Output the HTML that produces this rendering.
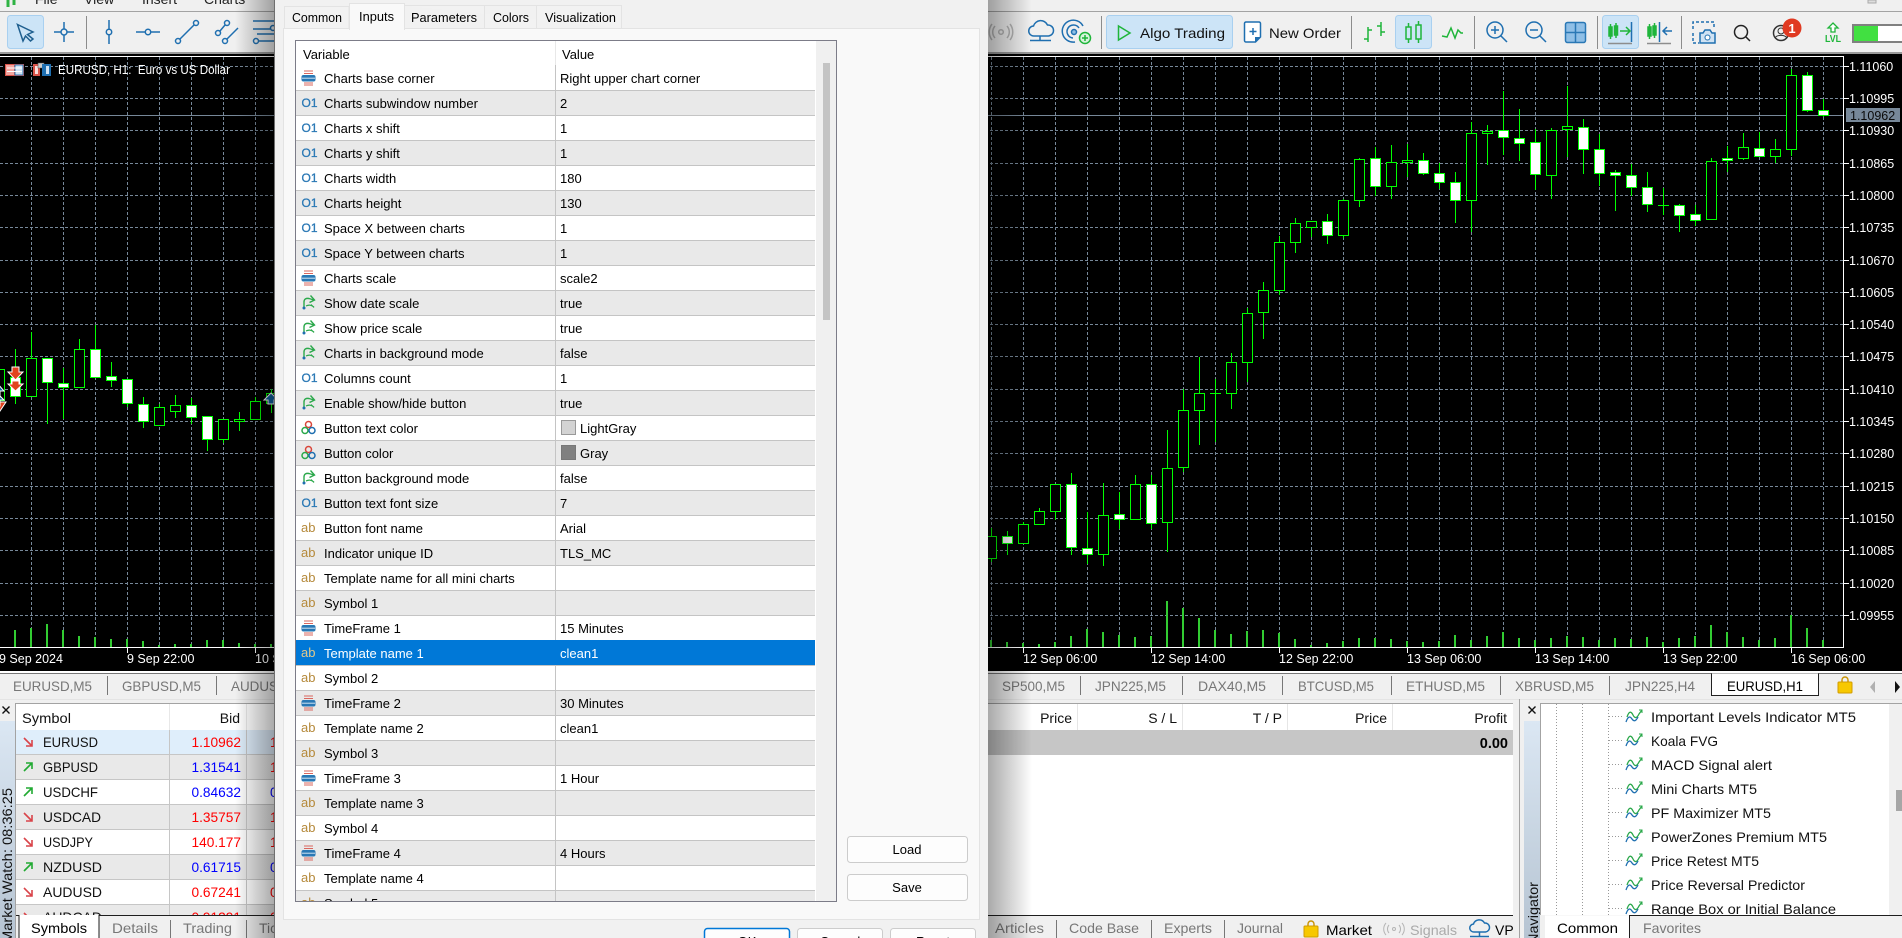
<!DOCTYPE html>
<html><head><meta charset="utf-8"><title>MetaTrader - Mini Charts inputs</title>
<style>
html,body{margin:0;padding:0;background:#f0f0f0;overflow:hidden}
svg{display:block}
text{font-family:"Liberation Sans",sans-serif;font-size:13px;fill:#000}
.c{font-size:12.5px;fill:#fff}
.t{font-size:14px;fill:#777}
.p{font-size:14px;fill:#111}
.m{font-size:14px;fill:#222}
.n{font-size:12px;fill:#2a78b5;stroke:#2a78b5;stroke-width:.3px}
.a{font-size:13px;fill:#b5893a}
.r{fill:#f00;font-size:13.7px}
.b{fill:#00f;font-size:13.7px}
.ic{fill:none;stroke:#1f6fb0;stroke-width:1.5}
.g{fill:none;stroke:#1fb53a;stroke-width:1.5}
</style></head><body>
<svg width="1902" height="938" viewBox="0 0 1902 938" xmlns="http://www.w3.org/2000/svg">
<defs>
<linearGradient id="sl" x1="0" x2="1" y1="0" y2="0"><stop offset="0" stop-color="#000" stop-opacity="0"/><stop offset="1" stop-color="#000" stop-opacity=".34"/></linearGradient>
<linearGradient id="sr" x1="0" x2="1" y1="0" y2="0"><stop offset="0" stop-color="#000" stop-opacity=".34"/><stop offset="1" stop-color="#000" stop-opacity="0"/></linearGradient>
<linearGradient id="bs" x1="0" x2="0" y1="0" y2="1"><stop offset="0" stop-color="#dbe7f3"/><stop offset="1" stop-color="#b6c4d2"/></linearGradient>
<g id="ie"><path d="M3 1h9M3 3.500h9M3 13h9M3 15h9" stroke="#d9665e" fill="none"/><rect x="0.500" y="5" width="14" height="6.500" rx="2" fill="#2a78b5"/><path d="M1 8.200h13" stroke="#cfe3f2"/></g>
<g id="ib" fill="none"><path d="M3 15V8C3 5 5 4 8 4.500L13 6" stroke="#2aa84a" stroke-width="1.400"/><path d="M9.500 1.500L13.500 6L8.500 8.500" stroke="#2aa84a" stroke-width="1.400"/><path d="M5 12C8 10.500 10 11 13 13M10 10.500L13 13.500" stroke="#2aa84a" stroke-width="1.200"/><circle cx="3" cy="14" r="1.500" fill="#1f6fb0"/></g>
<g id="icl"><circle cx="7.500" cy="4.500" r="3" fill="none" stroke="#d9463a" stroke-width="1.500"/><circle cx="4" cy="10.500" r="3" fill="none" stroke="#2aa84a" stroke-width="1.500"/><circle cx="11" cy="10.500" r="3" fill="none" stroke="#1f6fb0" stroke-width="1.500"/></g>
<g id="dn"><path d="M1 1L9 9M9 3V9H3" fill="none" stroke="#d9444a" stroke-width="1.600"/></g>
<g id="up"><path d="M1 9L9 1M3 1H9V7" fill="none" stroke="#22aa33" stroke-width="1.600"/></g>
<g id="tr" fill="none"><path d="M1 8C3 2 5 2 7 6S11 9 13 5L16 1" stroke="#2aa84a" stroke-width="1.300"/><path d="M0 13C2 7 4 7 6 10S10 12 12 8" stroke="#1f6fb0" stroke-width="1.300"/><path d="M13 1h3v3" stroke="#2aa84a"/></g>
<g id="bag"><rect x="0" y="5" width="14" height="11" rx="1" fill="#f7c800" stroke="#d29c00"/><path d="M4 5V3a3 3 0 0 1 6 0V5" fill="none" stroke="#c89200" stroke-width="1.400"/></g>
</defs>

<!-- base -->
<rect width="1902" height="938" fill="#f0f0f0"/>

<!-- menu -->
<path d="M8 0V7M14 0V5" stroke="#2fb344" stroke-width="3"/>
<text class="m" x="35" y="4">File</text><text class="m" x="84" y="4">View</text><text class="m" x="142" y="4">Insert</text><text class="m" x="204" y="4">Charts</text>
<rect y="11" width="1902" height="1" fill="#a3a3a3"/>

<!-- chart -->
<rect y="53" width="1902" height="618" fill="#000"/>
<rect y="52" width="1902" height="2" fill="#9a9a9a"/>
<rect y="56" width="1843" height="1" fill="#fff"/>
<path stroke="#778899" stroke-dasharray="3 2" fill="none" d="M0 66.500H1843M0 98.500H1843M0 130.500H1843M0 163.500H1843M0 195.500H1843M0 227.500H1843M0 260.500H1843M0 292.500H1843M0 324.500H1843M0 356.500H1843M0 389.500H1843M0 421.500H1843M0 453.500H1843M0 486.500H1843M0 518.500H1843M0 550.500H1843M0 583.500H1843M0 615.500H1843"/>
<path stroke="#778899" stroke-dasharray="3 2" fill="none" d="M31.500 57V647M63.500 57V647M95.500 57V647M127.500 57V647M159.500 57V647M191.500 57V647M223.500 57V647M255.500 57V647M991.500 57V647M1023.500 57V647M1055.500 57V647M1087.500 57V647M1119.500 57V647M1151.500 57V647M1183.500 57V647M1215.500 57V647M1247.500 57V647M1279.500 57V647M1311.500 57V647M1343.500 57V647M1375.500 57V647M1407.500 57V647M1439.500 57V647M1471.500 57V647M1503.500 57V647M1535.500 57V647M1567.500 57V647M1599.500 57V647M1631.500 57V647M1663.500 57V647M1695.500 57V647M1727.500 57V647M1759.500 57V647M1791.500 57V647M1823.500 57V647"/>
<rect y="115" width="1843" height="1" fill="#778899"/>

<!-- volumes -->
<path stroke="#32cd32" stroke-width="2" fill="none" d="M15 630V647M31 628V647M47 624V647M63 630V647M79 636V647M95 637V647M111 639V647M127 639V647M143 641V647M159 645V647M175 644V647M191 644V647M207 640V647M223 640V647M239 643V647M255 644V647M271 644V647M991 640V647M1007 642V647M1023 643V647M1039 644V647M1055 642V647M1071 636V647M1087 629V647M1103 632V647M1119 635V647M1135 637V647M1151 636V647M1167 601V647M1183 608V647M1199 618V647M1215 630V647M1231 634V647M1247 631V647M1263 630V647M1279 633V647M1295 639V647M1311 645V647M1327 643V647M1343 641V647M1359 638V647M1375 638V647M1391 639V647M1407 641V647M1423 642V647M1439 641V647M1455 635V647M1471 640V647M1487 636V647M1503 632V647M1519 638V647M1535 640V647M1551 638V647M1567 636V647M1583 637V647M1599 640V647M1615 638V647M1631 639V647M1647 637V647M1663 642V647M1679 638V647M1695 636V647M1711 625V647M1727 632V647M1743 637V647M1759 640V647M1775 638V647M1791 615V647M1807 628V647M1823 640V647"/>

<!-- wicks -->
<path stroke="#0f0" fill="none" d="M15.500 349V404M31.500 332V396M47.500 358V424M63.500 368V419M79.500 339V387M95.500 325V377M111.500 362V387M127.500 379V407M143.500 397V428M159.500 404V425M175.500 395V418M191.500 398V424M207.500 416V451M223.500 419V443M239.500 412V431M255.500 397V419M271.500 389V413M991.500 528V562M1007.500 531V555M1023.500 522V544M1039.500 508V524M1055.500 484V520M1071.500 473V555M1087.500 512V564M1103.500 483V566M1119.500 492V529M1135.500 475V520M1151.500 475V529M1167.500 430V552M1183.500 389V472M1199.500 357V445M1215.500 379V442M1231.500 353V409M1247.500 308V382M1263.500 282V339M1279.500 236V295M1295.500 218V253M1311.500 221V237M1327.500 214V244M1343.500 199V238M1359.500 158V207M1375.500 147V196M1391.500 145V199M1407.500 144V177M1423.500 153V175M1439.500 163V189M1455.500 172V223M1471.500 122V232M1487.500 125V165M1503.500 91V155M1519.500 109V161M1535.500 129V190M1551.500 128V199M1567.500 86V157M1583.500 119V174M1599.500 134V186M1615.500 170V211M1631.500 164V196M1647.500 172V212M1663.500 188V215M1679.500 204V232M1695.500 205V226M1711.500 158V219M1727.500 146V172M1743.500 133V160M1759.500 132V156M1775.500 139V163M1791.500 69V156M1807.500 72V112M1823.500 99V117M1210 393.500H1221M1658 205.500H1669"/>
<!-- hollow bodies -->
<path stroke="#0f0" fill="#000" d="M-5.500 369.500h10V400.500h-10zM26.500 358.500h10V396.500h-10zM74.500 349.500h10V387.500h-10zM154.500 407.500h10V425.500h-10zM170.500 405.500h10V411.500h-10zM218.500 419.500h10V439.500h-10zM234.500 419.500h10V421.500h-10zM250.500 401.500h10V419.500h-10zM266.500 393.500h10V403.500h-10zM986.500 536.500h10V558.500h-10zM1018.500 524.500h10V543.500h-10zM1034.500 511.500h10V524.500h-10zM1050.500 484.500h10V511.500h-10zM1098.500 515.500h10V554.500h-10zM1130.500 484.500h10V519.500h-10zM1162.500 468.500h10V522.500h-10zM1178.500 410.500h10V467.500h-10zM1194.500 393.500h10V410.500h-10zM1226.500 362.500h10V393.500h-10zM1242.500 313.500h10V362.500h-10zM1258.500 290.500h10V312.500h-10zM1274.500 242.500h10V290.500h-10zM1290.500 223.500h10V242.500h-10zM1306.500 221.500h10V227.500h-10zM1338.500 200.500h10V235.500h-10zM1354.500 159.500h10V200.500h-10zM1386.500 162.500h10V186.500h-10zM1402.500 160.500h10V162.500h-10zM1466.500 133.500h10V200.500h-10zM1482.500 131.500h10V133.500h-10zM1546.500 130.500h10V175.500h-10zM1562.500 126.500h10V129.500h-10zM1706.500 161.500h10V219.500h-10zM1738.500 147.500h10V158.500h-10zM1770.500 149.500h10V156.500h-10zM1786.500 75.500h10V149.500h-10z"/>
<!-- white bodies -->
<path stroke="#0f0" fill="#fff" d="M10.500 377.500h10V396.500h-10zM42.500 358.500h10V382.500h-10zM58.500 383.500h10V387.500h-10zM90.500 349.500h10V377.500h-10zM106.500 376.500h10V380.500h-10zM122.500 379.500h10V403.500h-10zM138.500 404.500h10V421.500h-10zM186.500 405.500h10V417.500h-10zM202.500 416.500h10V439.500h-10zM1002.500 536.500h10V543.500h-10zM1066.500 484.500h10V547.500h-10zM1082.500 548.500h10V554.500h-10zM1114.500 514.500h10V519.500h-10zM1146.500 484.500h10V523.500h-10zM1322.500 221.500h10V235.500h-10zM1370.500 158.500h10V186.500h-10zM1418.500 160.500h10V173.500h-10zM1434.500 173.500h10V182.500h-10zM1450.500 182.500h10V200.500h-10zM1498.500 130.500h10V137.500h-10zM1514.500 138.500h10V143.500h-10zM1530.500 142.500h10V174.500h-10zM1578.500 127.500h10V149.500h-10zM1594.500 149.500h10V173.500h-10zM1610.500 172.500h10V175.500h-10zM1626.500 175.500h10V187.500h-10zM1642.500 187.500h10V204.500h-10zM1674.500 205.500h10V215.500h-10zM1690.500 214.500h10V220.500h-10zM1722.500 158.500h10V160.500h-10zM1754.500 148.500h10V156.500h-10zM1802.500 75.500h10V110.500h-10zM1818.500 110.500h10V115.500h-10z"/>
<!-- signal arrows -->
<path fill="#e2431e" stroke="#fff" d="M12 367h7v5h4l-7.500 8L8 372h4zM12 381h7v3h4l-7.500 7L8 384h4zM-6 404h6v-2h6l-6 9z"/>
<path fill="#0e5f9e" stroke="#fff" d="M-2 384l6 7H0v6h-4zM-2 394l6 6H0v6h-4zM271 393l7 7h-4v4h-6v-4h-4z"/>

<!-- axes -->
<path fill="none" stroke="#fff" d="M1843.500 56V648M0 647.500H1844M1844 66.500h5M1844 98.500h5M1844 130.500h5M1844 163.500h5M1844 195.500h5M1844 227.500h5M1844 260.500h5M1844 292.500h5M1844 324.500h5M1844 356.500h5M1844 389.500h5M1844 421.500h5M1844 453.500h5M1844 486.500h5M1844 518.500h5M1844 550.500h5M1844 583.500h5M1844 615.500h5M127.500 648v5M255.500 648v5M1023.500 648v5M1151.500 648v5M1279.500 648v5M1407.500 648v5M1535.500 648v5M1663.500 648v5M1791.500 648v5"/>
<text class="c" x="1849" y="71">1.11060</text><text class="c" x="1849" y="103">1.10995</text><text class="c" x="1849" y="135">1.10930</text><text class="c" x="1849" y="168">1.10865</text><text class="c" x="1849" y="200">1.10800</text><text class="c" x="1849" y="232">1.10735</text><text class="c" x="1849" y="265">1.10670</text><text class="c" x="1849" y="297">1.10605</text><text class="c" x="1849" y="329">1.10540</text><text class="c" x="1849" y="361">1.10475</text><text class="c" x="1849" y="394">1.10410</text><text class="c" x="1849" y="426">1.10345</text><text class="c" x="1849" y="458">1.10280</text><text class="c" x="1849" y="491">1.10215</text><text class="c" x="1849" y="523">1.10150</text><text class="c" x="1849" y="555">1.10085</text><text class="c" x="1849" y="588">1.10020</text><text class="c" x="1849" y="620">1.09955</text>
<rect x="1846" y="108" width="54" height="14" fill="#778899"/>
<text class="c" x="1850" y="120" style="fill:#0b0b0b">1.10962</text>
<text class="c" x="-1" y="663">9 Sep 2024</text><text class="c" x="127" y="663">9 Sep 22:00</text><text class="c" x="255" y="663">10 Sep 06:00</text>
<text class="c" x="1023" y="663">12 Sep 06:00</text><text class="c" x="1151" y="663">12 Sep 14:00</text><text class="c" x="1279" y="663">12 Sep 22:00</text><text class="c" x="1407" y="663">13 Sep 06:00</text><text class="c" x="1535" y="663">13 Sep 14:00</text><text class="c" x="1663" y="663">13 Sep 22:00</text><text class="c" x="1791" y="663">16 Sep 06:00</text>
<!-- chart title -->
<g>
<rect x="5.500" y="64.500" width="18" height="11" fill="#fff" stroke="#d9544a"/><rect x="5.500" y="64.500" width="9" height="11" fill="#f2a6a0" stroke="#d9544a"/><rect x="15" y="65" width="8" height="10" fill="#cfe2f3" stroke="#2a78b5"/><path d="M7 68h15M7 71.500h15" stroke="#fff"/>
<path d="M33 64h7v12h-7z" fill="#d9544a"/><path d="M35 66h3v8h-3z" fill="#fbdedc"/><path d="M38 63h6v5h-6z" fill="#ccc" stroke="#555" stroke-width=".6"/><path d="M42 64h9v12h-9z" fill="#1f6fb0"/><path d="M46 66h3v8h-3z" fill="#cfe2f3"/>
</g>
<text class="c" x="58" y="74" textLength="172" lengthAdjust="spacingAndGlyphs">EURUSD, H1:&#160; Euro vs US Dollar</text>
<rect y="671" width="1902" height="2" fill="#fff"/>
<rect y="673" width="1902" height="1" fill="#777"/>

<!-- toolbar left -->
<rect x="7.500" y="15.500" width="36" height="33" rx="3" fill="#cce4f7" stroke="#a9d0f0"/>
<path d="M17.500 24.500L33 32L27.500 34.500L33 39L30.500 41L25.500 36L23 41Z" fill="none" stroke="#1f5f8f" stroke-width="1.500"/>
<g class="ic"><circle cx="64" cy="32" r="3"/><path d="M54 32h7M67 32h7M64 22v7M64 35v7"/></g>
<rect x="86" y="16" width="1" height="33" fill="#8c8c8c"/>
<g class="ic"><path d="M109 20v9M109 35v9"/><circle cx="109" cy="32" r="2.700"/><path d="M136 32h9M151 32h9"/><circle cx="148" cy="32" r="2.700"/><circle cx="178" cy="41" r="2.500"/><circle cx="196" cy="23" r="2.500"/><path d="M180 39L194 25"/><circle cx="218" cy="33" r="2.500"/><circle cx="227" cy="23" r="2.500"/><path d="M220 31L225 25"/><circle cx="225" cy="41" r="2.500"/><path d="M227 39L238 28"/><path d="M253 21h22M253 29h18M257 34h18M259 41h16"/><circle cx="273" cy="28" r="2.500"/><circle cx="256" cy="41" r="2.500"/></g>

<!-- toolbar right -->
<g fill="none" stroke="#b5b5b5" stroke-width="1.500"><circle cx="1001" cy="32" r="2.300"/><path d="M995 26a9 9 0 0 0 0 12M1007 26a9 9 0 0 1 0 12M992 24a13 13 0 0 0 0 16M1010 24a13 13 0 0 1 0 16"/></g>
<g class="ic"><path d="M1034 36a5 5 0 0 1-.5-10 7.500 7.500 0 0 1 14-1 5.500 5.500 0 0 1 1 11z"/><path d="M1040 36v4M1030 40.500h21"/></g>
<g class="ic"><path d="M1083 26a11 11 0 1 0-8 16"/><path d="M1079 28a6.500 6.500 0 1 0-6 10"/><circle cx="1074" cy="32" r="2.500" fill="#8fbfe6"/></g>
<circle cx="1085" cy="38" r="5.500" fill="#d7f3dc" stroke="#1fb53a" stroke-width="1.500"/><path d="M1082 38h6M1085 35v6" stroke="#1fb53a" stroke-width="1.500"/>
<rect x="1101" y="16" width="1" height="33" fill="#8c8c8c"/>
<rect x="1106.500" y="15.500" width="126" height="33" rx="3" fill="#cce4f7" stroke="#a9d0f0"/>
<path d="M1118.500 26L1130 33L1118.500 40Z" fill="none" stroke="#1fb53a" stroke-width="1.500"/>
<text class="m" x="1140" y="38" textLength="85" lengthAdjust="spacingAndGlyphs" style="fill:#111">Algo Trading</text>
<path d="M1246 22h13a1.500 1.500 0 0 1 1.500 1.500V37l-5 5h-9.500a1.500 1.500 0 0 1-1.500-1.500v-17a1.500 1.500 0 0 1 1.500-1.500z" fill="#fff" stroke="#1f6fb0" stroke-width="1.500"/>
<path d="M1253 28v7M1249.500 31.500h7" stroke="#1f6fb0" stroke-width="1.500"/><path d="M1255 42v-5h5z" fill="#1f6fb0"/>
<text class="m" x="1269" y="38" textLength="72" lengthAdjust="spacingAndGlyphs" style="fill:#111">New Order</text>
<rect x="1351" y="16" width="1" height="33" fill="#8c8c8c"/>
<path class="g" d="M1368 27v15M1364 39h4M1368 30h4M1381 22v14M1377 26h4M1381 32h4"/>
<rect x="1395.500" y="15.500" width="36" height="33" rx="3" fill="#cce4f7" stroke="#a9d0f0"/>
<path class="g" d="M1406 27h5v12h-5zM1408.500 23v4M1408.500 39v4M1416 25h5v14h-5zM1418.500 21v4M1418.500 39v4"/>
<path class="g" d="M1442 36L1447 37L1451 28L1455 38L1458 30L1461 33L1463 33"/>
<rect x="1474" y="16" width="1" height="33" fill="#8c8c8c"/>
<g class="ic"><circle cx="1495" cy="30" r="8"/><path d="M1501 36L1507 42M1491 30h8M1495 26v8"/><circle cx="1534" cy="30" r="8"/><path d="M1540 36L1546 42M1530 30h8"/></g>
<rect x="1565.500" y="22.500" width="20" height="20" rx="2" fill="#8fbfe6" stroke="#2a78b5" stroke-width="1.500"/><path d="M1575.500 22v21M1565 32.500h21" stroke="#2a78b5" stroke-width="1.500"/>
<rect x="1597" y="16" width="1" height="33" fill="#8c8c8c"/>
<rect x="1602.500" y="15.500" width="36" height="33" rx="3" fill="#cce4f7" stroke="#a9d0f0"/>
<path class="g" d="M1609 27h3v9h-3zM1610.500 24v15M1614.500 26h3v9h-3zM1616 23v15M1620 31h10M1626 27l4 4-4 4"/>
<path d="M1631.500 22v20" stroke="#1f6fb0" stroke-width="1.500"/><path d="M1608 43.500h24" stroke="#8d8d8d" stroke-width="1.500"/>
<path class="g" d="M1648 27h3v9h-3zM1649.500 24v15M1653 26h3v9h-3zM1654.500 23v15"/>
<path d="M1659.500 22v20M1672 31h-9M1667 27l-4 4 4 4" fill="none" stroke="#1f6fb0" stroke-width="1.500"/><path d="M1647 43.500h24" stroke="#8d8d8d" stroke-width="1.500"/>
<rect x="1681" y="16" width="1" height="33" fill="#8c8c8c"/>
<path d="M1693 29v-7h21v5M1693 33v10h6" fill="none" stroke="#1f6fb0" stroke-width="1.500" stroke-dasharray="3 2"/>
<path d="M1700 33h3l2-3h5l2 3h3v10h-15z" fill="#cfe2f3" stroke="#1f6fb0" stroke-width="1.500"/><circle cx="1707.500" cy="37.500" r="2.500" fill="#fff" stroke="#1f6fb0"/>
<circle cx="1741" cy="32" r="6.500" fill="none" stroke="#222" stroke-width="1.500"/><path d="M1746 37L1750 41" stroke="#222" stroke-width="1.500"/>
<circle cx="1781" cy="33" r="7.500" fill="#f0f0f0" stroke="#333" stroke-width="1.500"/><circle cx="1781" cy="31" r="3" fill="none" stroke="#333"/><path d="M1775 38c2-3.500 10-3.500 12 0" fill="none" stroke="#333"/>
<circle cx="1792" cy="28" r="9.500" fill="#e03a22"/><text x="1792" y="33" text-anchor="middle" style="fill:#fff;font-weight:bold;font-size:13px">1</text>
<path d="M1833 23l5 5h-3v4h-4v-4h-3z" fill="#fff" stroke="#1fb53a" stroke-width="1.300"/>
<text x="1825" y="42" textLength="16" lengthAdjust="spacingAndGlyphs" style="fill:#1fb53a;font-size:10px;font-weight:bold">LVL</text>
<rect x="1853" y="25" width="50" height="17" fill="#fff" stroke="#808080" stroke-width="2"/>
<rect x="1854" y="26" width="24" height="15" fill="#41e041"/>
<path d="M1868 0h8v3h-8z" fill="#ddd" stroke="#aaa"/>

<!-- chart tab bar -->
<g>
<text class="t" x="13" y="691" textLength="79" lengthAdjust="spacingAndGlyphs">EURUSD,M5</text><text class="t" x="122" y="691" textLength="79" lengthAdjust="spacingAndGlyphs">GBPUSD,M5</text><text class="t" x="231" y="691" textLength="79" lengthAdjust="spacingAndGlyphs">AUDUSD,M5</text>
<text class="t" x="1002" y="691" textLength="63" lengthAdjust="spacingAndGlyphs">SP500,M5</text><text class="t" x="1095" y="691" textLength="71" lengthAdjust="spacingAndGlyphs">JPN225,M5</text><text class="t" x="1198" y="691" textLength="68" lengthAdjust="spacingAndGlyphs">DAX40,M5</text><text class="t" x="1298" y="691" textLength="76" lengthAdjust="spacingAndGlyphs">BTCUSD,M5</text><text class="t" x="1406" y="691" textLength="79" lengthAdjust="spacingAndGlyphs">ETHUSD,M5</text><text class="t" x="1515" y="691" textLength="79" lengthAdjust="spacingAndGlyphs">XBRUSD,M5</text><text class="t" x="1625" y="691" textLength="70" lengthAdjust="spacingAndGlyphs">JPN225,H4</text>
<path stroke="#777" fill="none" d="M107.500 676v19M216.500 676v19M1080.500 676v19M1182.500 676v19M1282.500 676v19M1391.500 676v19M1500.500 676v19M1609.500 676v19"/>
<path d="M1711.500 673.500v22h107v-22" fill="#fff" stroke="#222"/>
<text class="p" x="1727" y="691" textLength="76" lengthAdjust="spacingAndGlyphs" style="fill:#000">EURUSD,H1</text>
<use href="#bag" x="1838" y="677"/>
<path d="M1875 681l-5 6 5 6z" fill="#b0b0b0"/><path d="M1895 681l5 6-5 6z" fill="#111"/>
</g>
<rect x="0" y="699" width="1902" height="1" fill="#e4e4e4"/>

<!-- market watch -->
<rect x="0" y="721" width="15" height="217" fill="url(#bs)"/>
<path d="M2.500 706.500l7 7M9.500 706.500l-7 7" stroke="#111" stroke-width="1.400"/>
<text class="p" transform="translate(12 943) rotate(-90)" textLength="155" lengthAdjust="spacingAndGlyphs">Market Watch: 08:36:25</text>
<rect x="16" y="703" width="260" height="235" fill="#fff"/>
<rect x="16" y="703" width="260" height="1" fill="#a3a3a3"/><rect x="15" y="703" width="1" height="235" fill="#a3a3a3"/>
<rect x="16" y="730" width="260" height="24" fill="#dfeefb"/>
<rect x="16" y="755" width="260" height="24" fill="#e9e9e9"/><rect x="16" y="805" width="260" height="24" fill="#e9e9e9"/><rect x="16" y="855" width="260" height="24" fill="#e9e9e9"/><rect x="16" y="905" width="260" height="24" fill="#e9e9e9"/>
<path stroke="#c6c6c6" fill="none" d="M16 754.500H276M16 779.500H276M16 804.500H276M16 829.500H276M16 854.500H276M16 879.500H276M16 904.500H276M169.500 730V915M246.500 730V915"/>
<path stroke="#e8e8e8" fill="none" d="M169.500 704V730M246.500 704V730"/>
<text class="p" x="22" y="723" textLength="49" lengthAdjust="spacingAndGlyphs">Symbol</text><text class="p" x="240" y="723" text-anchor="end">Bid</text>
<use href="#dn" x="23" y="737"/><text class="p" x="43" y="747" textLength="55" lengthAdjust="spacingAndGlyphs">EURUSD</text><text class="r" x="241" y="747" text-anchor="end">1.10962</text><text class="r" x="270" y="747">1.10963</text>
<use href="#up" x="23" y="762"/><text class="p" x="43" y="772" textLength="55" lengthAdjust="spacingAndGlyphs">GBPUSD</text><text class="b" x="241" y="772" text-anchor="end">1.31541</text><text class="r" x="270" y="772">1.31544</text>
<use href="#up" x="23" y="787"/><text class="p" x="43" y="797" textLength="55" lengthAdjust="spacingAndGlyphs">USDCHF</text><text class="b" x="241" y="797" text-anchor="end">0.84632</text><text class="b" x="270" y="797">0.84636</text>
<use href="#dn" x="23" y="812"/><text class="p" x="43" y="822" textLength="58" lengthAdjust="spacingAndGlyphs">USDCAD</text><text class="r" x="241" y="822" text-anchor="end">1.35757</text><text class="r" x="270" y="822">1.35760</text>
<use href="#dn" x="23" y="837"/><text class="p" x="43" y="847" textLength="50" lengthAdjust="spacingAndGlyphs">USDJPY</text><text class="r" x="241" y="847" text-anchor="end">140.177</text><text class="r" x="270" y="847">140.180</text>
<use href="#up" x="23" y="862"/><text class="p" x="43" y="872" textLength="59" lengthAdjust="spacingAndGlyphs">NZDUSD</text><text class="b" x="241" y="872" text-anchor="end">0.61715</text><text class="b" x="270" y="872">0.61719</text>
<use href="#dn" x="23" y="887"/><text class="p" x="43" y="897" textLength="59" lengthAdjust="spacingAndGlyphs">AUDUSD</text><text class="r" x="241" y="897" text-anchor="end">0.67241</text><text class="r" x="270" y="897">0.67244</text>
<use href="#dn" x="23" y="912"/><text class="p" x="43" y="922" textLength="59" lengthAdjust="spacingAndGlyphs">AUDCAD</text><text class="r" x="241" y="922" text-anchor="end">0.91291</text><text class="r" x="270" y="922">0.91296</text>
<rect x="16" y="915" width="260" height="23" fill="#f0f0f0"/>
<rect x="16" y="915" width="260" height="1" fill="#1e1e1e"/>
<path d="M19 915.500v23h80v-23" fill="#fff" stroke="#1e1e1e"/><rect x="19.500" y="915" width="79" height="2" fill="#fff"/>
<text class="p" x="31" y="933" textLength="56" lengthAdjust="spacingAndGlyphs" style="fill:#000">Symbols</text>
<text class="t" x="112" y="933" textLength="46" lengthAdjust="spacingAndGlyphs">Details</text><text class="t" x="183" y="933" textLength="49" lengthAdjust="spacingAndGlyphs">Trading</text><text class="t" x="259" y="933">Ticks</text>
<path stroke="#777" fill="none" d="M170.500 920v18M246.500 920v18"/>

<!-- toolbox -->
<rect x="988" y="703" width="525" height="212" fill="#fff"/>
<rect x="988" y="703" width="525" height="1" fill="#a3a3a3"/>
<rect x="988" y="730" width="525" height="25" fill="#c6c6c6"/>
<path stroke="#e6e6e6" fill="none" d="M1077.500 704V730M1182.500 704V730M1287.500 704V730M1392.500 704V730"/>
<text class="p" x="1072" y="723" text-anchor="end">Price</text><text class="p" x="1177" y="723" text-anchor="end">S / L</text><text class="p" x="1282" y="723" text-anchor="end">T / P</text><text class="p" x="1387" y="723" text-anchor="end">Price</text><text class="p" x="1507" y="723" text-anchor="end">Profit</text>
<text x="1508" y="748" text-anchor="end" style="font-weight:bold;font-size:14.5px">0.00</text>
<rect x="988" y="915" width="525" height="1" fill="#1e1e1e"/>
<text class="t" x="995" y="933" textLength="49" lengthAdjust="spacingAndGlyphs">Articles</text><text class="t" x="1069" y="933" textLength="70" lengthAdjust="spacingAndGlyphs">Code Base</text><text class="t" x="1164" y="933" textLength="48" lengthAdjust="spacingAndGlyphs">Experts</text><text class="t" x="1237" y="933" textLength="46" lengthAdjust="spacingAndGlyphs">Journal</text>
<path stroke="#777" fill="none" d="M1056.500 920v18M1151.500 920v18M1224.500 920v18"/>
<use href="#bag" x="1304" y="921"/>
<text class="p" x="1326" y="935" textLength="46" lengthAdjust="spacingAndGlyphs" style="fill:#000">Market</text>
<g fill="none" stroke="#b5b5b5"><circle cx="1394" cy="929" r="1.500"/><path d="M1389 925a6 6 0 0 0 0 8M1399 925a6 6 0 0 1 0 8M1386 923a9 9 0 0 0 0 12M1402 923a9 9 0 0 1 0 12"/></g>
<text x="1410" y="935" textLength="47" lengthAdjust="spacingAndGlyphs" style="fill:#aaa;font-size:14px">Signals</text>
<g class="ic"><path d="M1474 932a4 4 0 0 1-.5-8 6 6 0 0 1 11-1 4.500 4.500 0 0 1 1 9z"/><path d="M1479.500 932v4M1470 936.500h19"/></g>
<text class="p" x="1495" y="935" style="fill:#000">VPS</text>
<rect x="1513" y="703" width="389" height="235" fill="#f0f0f0"/>
<rect x="1519" y="699" width="1" height="239" fill="#a3a3a3"/>

<!-- navigator -->
<rect x="1524" y="721" width="16" height="217" fill="url(#bs)"/>
<path d="M1528.500 706.500l7 7M1535.500 706.500l-7 7" stroke="#111" stroke-width="1.400"/>
<text class="p" transform="translate(1538 944) rotate(-90)" textLength="62" lengthAdjust="spacingAndGlyphs">Navigator</text>
<rect x="1541" y="704" width="348" height="211" fill="#fff"/>
<rect x="1541" y="703" width="361" height="1" fill="#a3a3a3"/><rect x="1540" y="703" width="1" height="212" fill="#a3a3a3"/>
<rect x="1896" y="790" width="6" height="21" fill="#a6a6a6"/>
<path stroke="#999" stroke-dasharray="1 2" fill="none" d="M1556.500 704V915M1582.500 704V915M1608.500 704V915M1609 716.500H1623M1609 740.500H1623M1609 764.500H1623M1609 788.500H1623M1609 812.500H1623M1609 836.500H1623M1609 860.500H1623M1609 884.500H1623M1609 908.500H1623"/>
<use href="#tr" x="1626" y="709"/><text class="p" x="1651" y="722" textLength="205" lengthAdjust="spacingAndGlyphs">Important Levels Indicator MT5</text>
<use href="#tr" x="1626" y="733"/><text class="p" x="1651" y="746" textLength="67" lengthAdjust="spacingAndGlyphs">Koala FVG</text>
<use href="#tr" x="1626" y="757"/><text class="p" x="1651" y="770" textLength="121" lengthAdjust="spacingAndGlyphs">MACD Signal alert</text>
<use href="#tr" x="1626" y="781"/><text class="p" x="1651" y="794" textLength="106" lengthAdjust="spacingAndGlyphs">Mini Charts MT5</text>
<use href="#tr" x="1626" y="805"/><text class="p" x="1651" y="818" textLength="120" lengthAdjust="spacingAndGlyphs">PF Maximizer MT5</text>
<use href="#tr" x="1626" y="829"/><text class="p" x="1651" y="842" textLength="176" lengthAdjust="spacingAndGlyphs">PowerZones Premium MT5</text>
<use href="#tr" x="1626" y="853"/><text class="p" x="1651" y="866" textLength="108" lengthAdjust="spacingAndGlyphs">Price Retest MT5</text>
<use href="#tr" x="1626" y="877"/><text class="p" x="1651" y="890" textLength="154" lengthAdjust="spacingAndGlyphs">Price Reversal Predictor</text>
<use href="#tr" x="1626" y="901"/><text class="p" x="1651" y="914" textLength="185" lengthAdjust="spacingAndGlyphs">Range Box or Initial Balance</text>
<rect x="1541" y="915" width="361" height="23" fill="#f0f0f0"/>
<rect x="1629" y="915" width="273" height="1" fill="#1e1e1e"/>
<path d="M1545 915.500v23h84v-23" fill="#fff" stroke="none"/><path d="M1629.500 915v23" stroke="#1e1e1e"/>
<text class="p" x="1557" y="933" textLength="61" lengthAdjust="spacingAndGlyphs" style="fill:#000">Common</text>
<text class="t" x="1643" y="933" textLength="58" lengthAdjust="spacingAndGlyphs">Favorites</text>

<!-- dialog shadows -->
<rect x="235" y="0" width="40" height="938" fill="url(#sl)"/>
<rect x="988" y="0" width="44" height="938" fill="url(#sr)"/>

<!-- dialog -->
<rect x="275" y="0" width="713" height="938" fill="#f1f1f1"/>
<rect x="274" y="0" width="1" height="938" fill="#6f6f6f"/>
<rect x="283.500" y="28.500" width="696" height="891" fill="#f9f9f9" stroke="#e3e3e3"/>
<!-- tabs -->
<path d="M284.500 28V6.500H349V28M404.500 28V5.500M484.500 28V5.500H536.500V28M621.500 28V5.500H404" fill="#f2f2f2" stroke="#e3e3e3"/>
<rect x="349.500" y="3.500" width="55" height="26" fill="#f9f9f9" stroke="#e3e3e3"/><rect x="350" y="27" width="54" height="3" fill="#f9f9f9"/>
<text x="292" y="22" textLength="50" lengthAdjust="spacingAndGlyphs">Common</text><text x="359" y="21" textLength="35" lengthAdjust="spacingAndGlyphs">Inputs</text><text x="411" y="22" textLength="66" lengthAdjust="spacingAndGlyphs">Parameters</text><text x="493" y="22" textLength="36" lengthAdjust="spacingAndGlyphs">Colors</text><text x="545" y="22" textLength="71" lengthAdjust="spacingAndGlyphs">Visualization</text>

<!-- table -->
<rect x="295.500" y="40.500" width="541" height="861" fill="#fff" stroke="#7c7c88"/>
<rect x="816" y="41" width="20" height="860" fill="#f0f0f0"/>
<rect x="823" y="63" width="7" height="257" fill="#c4c4c4"/>
<path fill="#e9e9e9" d="M296 90h519v25H296zM296 140h519v25H296zM296 190h519v25H296zM296 240h519v25H296zM296 290h519v25H296zM296 340h519v25H296zM296 390h519v25H296zM296 440h519v25H296zM296 490h519v25H296zM296 540h519v25H296zM296 590h519v25H296zM296 690h519v25H296zM296 740h519v25H296zM296 790h519v25H296zM296 840h519v25H296zM296 890h519v11H296z"/>
<path stroke="#c4c4c4" fill="none" d="M296 90.500H815M296 115.500H815M296 140.500H815M296 165.500H815M296 190.500H815M296 215.500H815M296 240.500H815M296 265.500H815M296 290.500H815M296 315.500H815M296 340.500H815M296 365.500H815M296 390.500H815M296 415.500H815M296 440.500H815M296 465.500H815M296 490.500H815M296 515.500H815M296 540.500H815M296 565.500H815M296 590.500H815M296 615.500H815M296 640.500H815M296 665.500H815M296 690.500H815M296 715.500H815M296 740.500H815M296 765.500H815M296 790.500H815M296 815.500H815M296 840.500H815M296 865.500H815M296 890.500H815M555.500 65V901"/>
<path stroke="#e8e8e8" d="M555.500 41V65"/>
<rect x="296" y="640" width="519" height="25" fill="#0078d7"/>
<text x="303" y="59">Variable</text><text x="562" y="59">Value</text>

<use href="#ie" x="301" y="70"/><text x="324" y="83">Charts base corner</text><text x="560" y="83">Right upper chart corner</text>
<text class="n" x="301.500" y="107">O1</text><text x="324" y="108">Charts subwindow number</text><text x="560" y="108">2</text>
<text class="n" x="301.500" y="132">O1</text><text x="324" y="133">Charts x shift</text><text x="560" y="133">1</text>
<text class="n" x="301.500" y="157">O1</text><text x="324" y="158">Charts y shift</text><text x="560" y="158">1</text>
<text class="n" x="301.500" y="182">O1</text><text x="324" y="183">Charts width</text><text x="560" y="183">180</text>
<text class="n" x="301.500" y="207">O1</text><text x="324" y="208">Charts height</text><text x="560" y="208">130</text>
<text class="n" x="301.500" y="232">O1</text><text x="324" y="233">Space X between charts</text><text x="560" y="233">1</text>
<text class="n" x="301.500" y="257">O1</text><text x="324" y="258">Space Y between charts</text><text x="560" y="258">1</text>
<use href="#ie" x="301" y="270"/><text x="324" y="283">Charts scale</text><text x="560" y="283">scale2</text>
<use href="#ib" x="301" y="294"/><text x="324" y="308">Show date scale</text><text x="560" y="308">true</text>
<use href="#ib" x="301" y="319"/><text x="324" y="333">Show price scale</text><text x="560" y="333">true</text>
<use href="#ib" x="301" y="344"/><text x="324" y="358">Charts in background mode</text><text x="560" y="358">false</text>
<text class="n" x="301.500" y="382">O1</text><text x="324" y="383">Columns count</text><text x="560" y="383">1</text>
<use href="#ib" x="301" y="394"/><text x="324" y="408">Enable show/hide button</text><text x="560" y="408">true</text>
<use href="#icl" x="301" y="420"/><text x="324" y="433">Button text color</text><rect x="561.500" y="420.500" width="14" height="14" fill="#d3d3d3" stroke="#999"/><text x="580" y="433">LightGray</text>
<use href="#icl" x="301" y="445"/><text x="324" y="458">Button color</text><rect x="561.500" y="445.500" width="14" height="14" fill="#808080" stroke="#777"/><text x="580" y="458">Gray</text>
<use href="#ib" x="301" y="469"/><text x="324" y="483">Button background mode</text><text x="560" y="483">false</text>
<text class="n" x="301.500" y="507">O1</text><text x="324" y="508">Button text font size</text><text x="560" y="508">7</text>
<text class="a" x="301" y="532">ab</text><text x="324" y="533">Button font name</text><text x="560" y="533">Arial</text>
<text class="a" x="301" y="557">ab</text><text x="324" y="558">Indicator unique ID</text><text x="560" y="558">TLS_MC</text>
<text class="a" x="301" y="582">ab</text><text x="324" y="583">Template name for all mini charts</text>
<text class="a" x="301" y="607">ab</text><text x="324" y="608">Symbol 1</text>
<use href="#ie" x="301" y="620"/><text x="324" y="633">TimeFrame 1</text><text x="560" y="633">15 Minutes</text>
<text class="a" x="301" y="657" style="fill:#e0c98c">ab</text><text x="324" y="658" style="fill:#fff">Template name 1</text><text x="560" y="658" style="fill:#fff">clean1</text>
<text class="a" x="301" y="682">ab</text><text x="324" y="683">Symbol 2</text>
<use href="#ie" x="301" y="695"/><text x="324" y="708">TimeFrame 2</text><text x="560" y="708">30 Minutes</text>
<text class="a" x="301" y="732">ab</text><text x="324" y="733">Template name 2</text><text x="560" y="733">clean1</text>
<text class="a" x="301" y="757">ab</text><text x="324" y="758">Symbol 3</text>
<use href="#ie" x="301" y="770"/><text x="324" y="783">TimeFrame 3</text><text x="560" y="783">1 Hour</text>
<text class="a" x="301" y="807">ab</text><text x="324" y="808">Template name 3</text>
<text class="a" x="301" y="832">ab</text><text x="324" y="833">Symbol 4</text>
<use href="#ie" x="301" y="845"/><text x="324" y="858">TimeFrame 4</text><text x="560" y="858">4 Hours</text>
<text class="a" x="301" y="882">ab</text><text x="324" y="883">Template name 4</text>
<text class="a" x="301" y="907">ab</text><text x="324" y="908">Symbol 5</text>
<rect x="296" y="902" width="541" height="14" fill="#f9f9f9"/>
<rect x="295" y="901" width="542" height="1" fill="#7c7c88"/>

<!-- buttons -->
<rect x="847.500" y="836.500" width="120" height="26" rx="3" fill="#fdfdfd" stroke="#ccc"/><text x="907" y="854" text-anchor="middle">Load</text>
<rect x="847.500" y="874.500" width="120" height="26" rx="3" fill="#fdfdfd" stroke="#ccc"/><text x="907" y="892" text-anchor="middle">Save</text>
<rect x="704.500" y="928.500" width="85" height="26" rx="3" fill="#fdfdfd" stroke="#0078d7" stroke-width="1.500"/><text x="747" y="946" text-anchor="middle">OK</text>
<rect x="797.500" y="928.500" width="85" height="26" rx="3" fill="#fdfdfd" stroke="#ccc"/><text x="840" y="946" text-anchor="middle">Cancel</text>
<rect x="890.500" y="928.500" width="85" height="26" rx="3" fill="#fdfdfd" stroke="#ccc"/><text x="933" y="946" text-anchor="middle">Reset</text>
</svg>
</body></html>
